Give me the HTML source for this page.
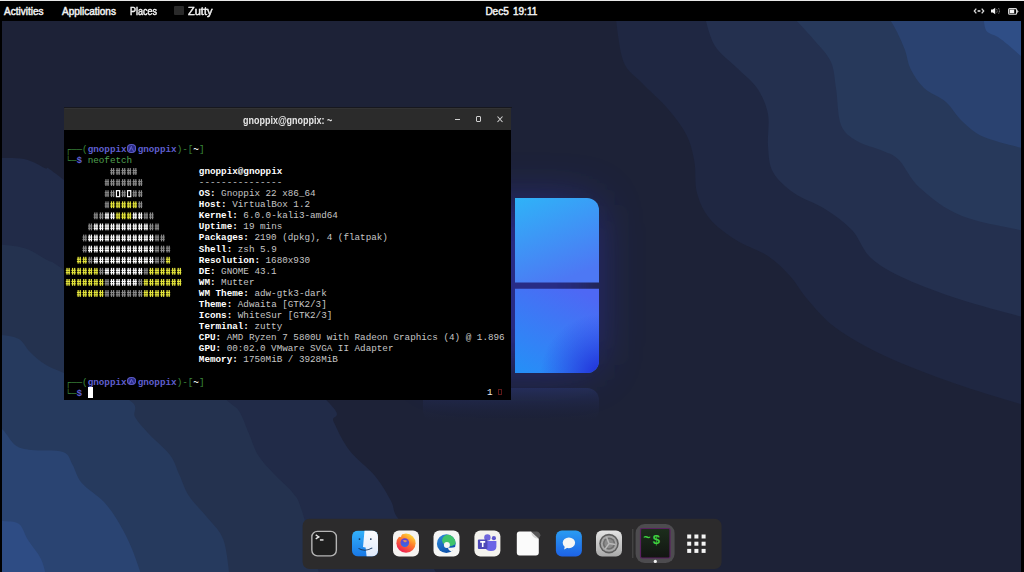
<!DOCTYPE html>
<html><head><meta charset="utf-8">
<style>
*{box-sizing:border-box}
html,body{margin:0;padding:0}
body{width:1024px;height:572px;overflow:hidden;background:#000;position:relative;font-family:"Liberation Sans",sans-serif}
.abs{position:absolute}
#wall{position:absolute;left:2px;top:21px;width:1019px;height:551px;overflow:hidden}
#topbar{position:absolute;left:0;top:0;width:1024px;height:21px;background:#000}
#topbar .t{position:absolute;top:6px;transform-origin:0 0;color:#f2f2f2;font-weight:normal;-webkit-text-stroke:0.45px #f2f2f2;font-size:10px;line-height:12px;white-space:nowrap}
#term{position:absolute;left:64px;top:108px;width:447px;height:292px;background:#000;border-radius:1px 1px 0 0;overflow:hidden}
#thead{position:absolute;left:0;top:0;width:447px;height:22px;background:#2b2b2b}
.tl{position:absolute;font-family:"Liberation Mono",monospace;font-size:9.27px;line-height:11.09px;white-space:pre;color:#cfcfcf}
#dock{position:absolute;left:302px;top:519px;width:420px;height:50px;background:#2e2d2e;border-radius:10px}
.ic{position:absolute;top:530.5px;width:26px;height:26px;border-radius:6px;overflow:hidden}
</style></head>
<body>
<div id="wall">
<svg width="1019" height="551" viewBox="2 21 1019 551" style="position:absolute;left:0;top:0">
<defs>
<radialGradient id="glow" cx="0.5" cy="0.5" r="0.5">
<stop offset="0" stop-color="#2a3a9a" stop-opacity="0.55"/>
<stop offset="0.6" stop-color="#23307a" stop-opacity="0.25"/>
<stop offset="1" stop-color="#1e2235" stop-opacity="0"/>
</radialGradient>
<linearGradient id="wt" gradientUnits="userSpaceOnUse" x1="500" y1="195" x2="540" y2="290">
<stop offset="0" stop-color="#2cb8f8"/>
<stop offset="1" stop-color="#4d78f4"/>
</linearGradient>
<linearGradient id="wb" gradientUnits="userSpaceOnUse" x1="570" y1="285" x2="520" y2="375">
<stop offset="0" stop-color="#4e68f4"/>
<stop offset="1" stop-color="#2490f7"/>
</linearGradient>
<radialGradient id="wb2" gradientUnits="userSpaceOnUse" cx="602" cy="376" r="62">
<stop offset="0" stop-color="#1e2ad6" stop-opacity="1"/>
<stop offset="1" stop-color="#2a3ae0" stop-opacity="0"/>
</radialGradient>
<linearGradient id="refl" x1="0" y1="0" x2="0" y2="1">
<stop offset="0" stop-color="#2c3b78" stop-opacity="0.42"/>
<stop offset="1" stop-color="#1f2440" stop-opacity="0"/>
</linearGradient>
</defs>
<rect x="0" y="0" width="1030" height="600" fill="#1d2237"/>
<path fill="#1f2742" d="M615.7,18.0 C617.0,25.3 619.2,51.2 623.6,62.0 C628.0,72.8 634.6,75.2 642.0,83.0 C649.4,90.8 660.6,100.3 668.0,109.0 C675.4,117.7 682.1,126.2 686.5,135.0 C690.9,143.8 692.6,151.9 694.4,161.6 C696.1,171.3 694.4,183.4 697.0,193.0 C699.6,202.6 703.5,211.2 710.0,219.0 C716.5,226.8 726.3,233.8 736.0,240.0 C745.7,246.2 759.0,250.0 768.0,256.0 C777.0,262.0 783.3,268.7 790.0,276.0 C796.7,283.3 800.3,291.3 808.0,300.0 C815.7,308.7 823.2,318.7 836.0,328.0 C848.8,337.3 865.2,346.7 885.0,356.0 C904.8,365.3 930.8,375.1 955.0,383.6 C979.2,392.1 1017.5,403.1 1030.0,407.0 L1030.0,18.0 Z"/>
<path fill="#24304f" d="M705.0,18.0 C706.7,22.7 709.8,37.8 715.0,46.0 C720.2,54.2 729.0,60.0 736.0,67.0 C743.0,74.0 751.7,80.2 757.0,88.0 C762.3,95.8 766.2,104.3 768.0,114.0 C769.8,123.7 767.2,136.3 768.0,146.0 C768.8,155.7 768.7,164.2 773.0,172.0 C777.3,179.8 785.3,186.8 794.0,193.0 C802.7,199.2 815.3,202.8 825.0,209.0 C834.7,215.2 844.3,221.8 852.0,230.0 C859.7,238.2 862.0,249.8 871.0,258.0 C880.0,266.2 890.8,272.0 906.0,279.0 C921.2,286.0 941.3,293.3 962.0,300.0 C982.7,306.7 1018.7,315.8 1030.0,319.0 L1030.0,18.0 Z"/>
<path fill="#27395b" d="M794.0,18.0 C797.5,21.8 808.8,33.7 815.0,41.0 C821.2,48.3 827.5,54.2 831.0,62.0 C834.5,69.8 834.3,77.5 836.0,88.0 C837.7,98.5 837.5,116.2 841.0,125.0 C844.5,133.8 850.0,136.7 857.0,141.0 C864.0,145.3 876.0,147.8 883.0,151.0 C890.0,154.2 892.8,153.8 899.0,160.0 C905.2,166.2 909.5,178.7 920.0,188.0 C930.5,197.3 943.7,208.7 962.0,216.0 C980.3,223.3 1018.7,229.3 1030.0,232.0 L1030.0,18.0 Z"/>
<path fill="#2a4270" d="M889.0,18.0 C890.2,20.0 893.3,24.7 896.0,30.0 C898.7,35.3 902.6,43.5 905.0,50.0 C907.4,56.5 907.4,62.7 910.6,69.0 C913.8,75.3 918.1,82.5 924.0,88.0 C929.9,93.5 939.7,96.5 946.0,102.0 C952.3,107.5 955.7,115.2 962.0,121.0 C968.3,126.8 972.7,132.2 984.0,137.0 C995.3,141.8 1022.3,147.8 1030.0,150.0 L1030.0,18.0 Z"/>
<path fill="#2f4e86" d="M983.5,18.0 C984.0,20.2 984.2,27.9 986.5,31.0 C988.8,34.1 993.8,34.4 997.4,36.7 C1001.0,39.0 1002.9,40.5 1008.3,45.0 C1013.7,49.5 1026.4,60.8 1030.0,64.0 L1030.0,18.0 Z"/>
<path fill="#212b48" d="M-5.0,158.0 C-0.2,158.2 15.8,157.3 24.0,159.0 C32.2,160.7 37.8,164.5 44.5,168.0 C51.2,171.5 38.1,159.7 64.0,180.0 C89.9,200.3 156.4,253.4 200.0,290.0 C243.6,326.6 303.4,377.5 325.7,399.5 C348.0,421.5 329.6,413.3 333.6,421.8 C337.6,430.3 342.6,441.5 349.5,450.5 C356.4,459.5 368.1,467.6 375.0,476.0 C381.9,484.4 387.3,494.2 391.0,501.0 C394.7,507.8 392.2,509.7 397.0,517.0 C401.8,524.3 412.8,534.5 420.0,545.0 C427.2,555.5 436.7,574.2 440.0,580.0 L-5.0,580.0 Z"/>
<path fill="#24324f" d="M-5.0,244.0 C-0.2,244.7 15.3,245.3 24.0,248.0 C32.7,250.7 40.3,256.3 47.0,260.0 C53.7,263.7 46.8,257.5 64.0,270.0 C81.2,282.5 122.9,313.3 150.0,335.0 C177.1,356.7 211.8,387.3 226.6,400.0 C241.4,412.7 235.3,405.5 239.0,411.0 C242.7,416.5 245.5,425.7 248.7,433.0 C251.9,440.3 253.8,448.2 258.0,455.0 C262.2,461.8 268.2,467.7 274.0,474.0 C279.8,480.3 288.0,486.5 292.7,492.7 C297.4,498.9 297.3,496.4 302.0,511.0 C306.7,525.5 317.8,568.5 321.0,580.0 L-5.0,580.0 Z"/>
<path fill="#263a5e" d="M-5.0,334.0 C-1.2,334.8 12.2,335.6 18.0,338.6 C23.8,341.6 25.6,347.8 30.0,352.0 C34.4,356.2 38.8,360.5 44.5,364.0 C50.2,367.5 49.9,367.0 64.0,373.0 C78.1,379.0 117.2,392.7 129.0,400.0 C140.8,407.3 131.8,411.5 135.0,417.0 C138.2,422.5 142.2,426.7 148.0,433.0 C153.8,439.3 164.8,448.2 170.0,455.0 C175.2,461.8 175.8,467.2 179.0,474.0 C182.2,480.8 184.2,488.7 189.0,496.0 C193.8,503.3 201.9,510.7 207.7,518.0 C213.4,525.3 219.8,529.7 223.5,540.0 C227.2,550.3 228.9,573.3 230.0,580.0 L-5.0,580.0 Z"/>
<path fill="#2a4472" d="M-5.0,428.0 C-3.7,428.3 -0.4,427.1 3.0,430.0 C6.4,432.9 10.9,442.2 15.7,445.5 C20.4,448.8 23.6,448.9 31.5,450.0 C39.4,451.1 56.2,449.6 63.0,452.0 C69.8,454.4 69.3,459.2 72.4,464.4 C75.5,469.6 76.5,476.7 81.8,483.0 C87.1,489.3 97.7,495.2 104.0,502.0 C110.3,508.8 114.9,516.2 119.6,524.0 C124.3,531.8 128.1,539.7 132.0,549.0 C135.9,558.3 141.2,574.8 143.0,580.0 L-5.0,580.0 Z"/>
<path fill="#2e4c84" d="M-5.0,520.0 C-3.7,520.2 -1.0,520.3 3.0,521.0 C7.0,521.7 14.8,520.8 19.0,524.0 C23.2,527.2 24.3,534.2 28.0,540.0 C31.7,545.8 37.8,552.3 41.0,559.0 C44.2,565.7 46.0,576.5 47.0,580.0 L-5.0,580.0 Z"/>

<filter id="bl" x="-100%" y="-100%" width="300%" height="300%"><feGaussianBlur stdDeviation="24"/></filter>
<rect x="433" y="205" width="160" height="160" rx="10" fill="#3036c8" opacity="0.55" filter="url(#bl)"/>
<rect x="423" y="388" width="176" height="34" rx="12" fill="url(#refl)"/>
<path d="M423,198 H508 V283 H423 Z" fill="url(#wt)"/>
<path d="M515,198 H587 A12,12 0 0 1 599,210 V282.5 H515 Z" fill="url(#wt)"/>
<path d="M515,288.8 H599 V361 A12,12 0 0 1 587,373 H515 Z" fill="url(#wb)"/>
<path d="M515,288.8 H599 V361 A12,12 0 0 1 587,373 H515 Z" fill="url(#wb2)"/>
</svg>
</div>

<div id="topbar">
<div class="abs" style="left:0;top:0;width:1024px;height:1px;background:#e8e8e8"></div>
<div class="t" style="left:4px;transform:scaleX(1)">Activities</div>
<div class="t" style="left:62px;transform:scaleX(1)">Applications</div>
<div class="t" style="left:129.7px;transform:scaleX(0.9)">Places</div>
<div class="abs" style="left:174.4px;top:6.2px;width:9.6px;height:9.2px;background:#2a2a2a;border-radius:1px"></div>
<div class="t" style="left:187.8px;transform:scaleX(1.1)">Zutty</div>
<div class="t" style="left:485.4px;transform:scaleX(1)">Dec</div><div class="t" style="left:503.3px;transform:scaleX(1)">5</div><div class="t" style="left:513px;transform:scaleX(1)">19:11</div>
<svg class="abs" style="left:970px;top:4px" width="52" height="14" viewBox="0 0 52 14">
<path d="M6.3,4.6 L4.3,7 L6.3,9.4 M11.7,4.6 L13.7,7 L11.7,9.4" stroke="#d8d8d8" stroke-width="1.3" fill="none"/>
<path d="M7.6,7 H10.4" stroke="#e0e0e0" stroke-width="1.6"/>
<path d="M21,5.6 H22.8 L25.2,3.8 V10.2 L22.8,8.4 H21 Z" fill="#f0f0f0"/>
<path d="M26.6,5.2 Q27.8,7 26.6,8.8 M28.4,4 Q30.4,7 28.4,10" stroke="#9a9a9a" stroke-width="1" fill="none" stroke-dasharray="1 0.6"/>
<rect x="38.6" y="4.6" width="8" height="5.6" rx="1" stroke="#dcdcdc" stroke-width="1.1" fill="none"/>
<rect x="39.6" y="5.6" width="4.6" height="3.6" fill="#f4f4f4"/>
<path d="M47.1,5.8 L48.6,7.4 L47.1,9 Z" fill="#dcdcdc"/>
</svg>
</div>

<div class="abs" style="left:63.5px;top:107px;width:448px;height:1.2px;background:#17181e"></div>
<div id="term">
<div id="thead">
<div class="abs" style="left:0;top:0;width:447px;height:1px;background:#333"></div>
<div class="abs" style="left:178.5px;top:7px;font-size:10px;line-height:12px;font-weight:bold;color:#e6e6e6;white-space:nowrap;transform:scaleX(0.897);transform-origin:0 0">gnoppix@gnoppix: ~</div>
<div class="abs" style="left:390.8px;top:11px;width:5.2px;height:1px;background:#d0d0d0"></div>
<div class="abs" style="left:411.9px;top:8.1px;width:4.9px;height:5.6px;border:1px solid #d0d0d0;border-radius:1px"></div>
<svg class="abs" style="left:432.5px;top:7.6px" width="7" height="7" viewBox="0 0 7 7"><path d="M0.5,0.5 L5.5,6 M5.5,0.5 L0.5,6" stroke="#d0d0d0" stroke-width="1.1"/></svg>
</div>
</div>
<div class="abs" style="left:0;top:0;width:1024px;height:572px">
<div class="tl" style="top:143.75px;left:65.40px"><span style="color:#3d8a3d">┌──(</span><span style="color:#5f5fcf;font-weight:bold">gnoppix</span><span style="display:inline-block;width:11.12px;height:8px;position:relative;vertical-align:-1px"><span style="position:absolute;left:0.6px;top:-0.6px;width:9.3px;height:8.4px;border-radius:45%;background:#2a2a86;border:1.1px solid #5c5cc4"></span><span style="position:absolute;left:3.2px;top:1.2px;width:1.3px;height:5px;background:#6a6ad0;transform:rotate(25deg)"></span><span style="position:absolute;left:5.8px;top:1.8px;width:1.3px;height:4.5px;background:#5a5ac0;transform:rotate(-30deg)"></span></span><span style="color:#5f5fcf;font-weight:bold">gnoppix</span><span style="color:#3d8a3d">)-[</span><span style="color:#ffffff;font-weight:bold">~</span><span style="color:#3d8a3d">]</span></div>
<div class="tl" style="top:154.84px;left:65.40px"><span style="color:#3d8a3d">└─</span><span style="color:#5f5fcf;font-weight:bold">$</span><span style="color:#52a352"> neofetch</span></div>
<svg class="abs" style="left:0;top:0" width="1024" height="572"><g fill="#8a8a8a"><rect x="110.88" y="168.08" width="1.25" height="6.8"/><rect x="112.98" y="168.08" width="1.25" height="6.8"/><rect x="110.28" y="169.98" width="4.3" height="1.1"/><rect x="110.28" y="172.28" width="4.3" height="1.1"/></g><g fill="#8a8a8a"><rect x="116.44" y="168.08" width="1.25" height="6.8"/><rect x="118.54" y="168.08" width="1.25" height="6.8"/><rect x="115.84" y="169.98" width="4.3" height="1.1"/><rect x="115.84" y="172.28" width="4.3" height="1.1"/></g><g fill="#8a8a8a"><rect x="122.00" y="168.08" width="1.25" height="6.8"/><rect x="124.10" y="168.08" width="1.25" height="6.8"/><rect x="121.40" y="169.98" width="4.3" height="1.1"/><rect x="121.40" y="172.28" width="4.3" height="1.1"/></g><g fill="#8a8a8a"><rect x="127.56" y="168.08" width="1.25" height="6.8"/><rect x="129.66" y="168.08" width="1.25" height="6.8"/><rect x="126.96" y="169.98" width="4.3" height="1.1"/><rect x="126.96" y="172.28" width="4.3" height="1.1"/></g><g fill="#8a8a8a"><rect x="133.12" y="168.08" width="1.25" height="6.8"/><rect x="135.22" y="168.08" width="1.25" height="6.8"/><rect x="132.52" y="169.98" width="4.3" height="1.1"/><rect x="132.52" y="172.28" width="4.3" height="1.1"/></g><g fill="#8a8a8a"><rect x="105.32" y="179.17" width="1.25" height="6.8"/><rect x="107.42" y="179.17" width="1.25" height="6.8"/><rect x="104.72" y="181.07" width="4.3" height="1.1"/><rect x="104.72" y="183.37" width="4.3" height="1.1"/></g><g fill="#8a8a8a"><rect x="110.88" y="179.17" width="1.25" height="6.8"/><rect x="112.98" y="179.17" width="1.25" height="6.8"/><rect x="110.28" y="181.07" width="4.3" height="1.1"/><rect x="110.28" y="183.37" width="4.3" height="1.1"/></g><g fill="#8a8a8a"><rect x="116.44" y="179.17" width="1.25" height="6.8"/><rect x="118.54" y="179.17" width="1.25" height="6.8"/><rect x="115.84" y="181.07" width="4.3" height="1.1"/><rect x="115.84" y="183.37" width="4.3" height="1.1"/></g><g fill="#8a8a8a"><rect x="122.00" y="179.17" width="1.25" height="6.8"/><rect x="124.10" y="179.17" width="1.25" height="6.8"/><rect x="121.40" y="181.07" width="4.3" height="1.1"/><rect x="121.40" y="183.37" width="4.3" height="1.1"/></g><g fill="#8a8a8a"><rect x="127.56" y="179.17" width="1.25" height="6.8"/><rect x="129.66" y="179.17" width="1.25" height="6.8"/><rect x="126.96" y="181.07" width="4.3" height="1.1"/><rect x="126.96" y="183.37" width="4.3" height="1.1"/></g><g fill="#8a8a8a"><rect x="133.12" y="179.17" width="1.25" height="6.8"/><rect x="135.22" y="179.17" width="1.25" height="6.8"/><rect x="132.52" y="181.07" width="4.3" height="1.1"/><rect x="132.52" y="183.37" width="4.3" height="1.1"/></g><g fill="#8a8a8a"><rect x="138.68" y="179.17" width="1.25" height="6.8"/><rect x="140.78" y="179.17" width="1.25" height="6.8"/><rect x="138.08" y="181.07" width="4.3" height="1.1"/><rect x="138.08" y="183.37" width="4.3" height="1.1"/></g><g fill="#8a8a8a"><rect x="105.32" y="190.26" width="1.25" height="6.8"/><rect x="107.42" y="190.26" width="1.25" height="6.8"/><rect x="104.72" y="192.16" width="4.3" height="1.1"/><rect x="104.72" y="194.46" width="4.3" height="1.1"/></g><g fill="#8a8a8a"><rect x="110.88" y="190.26" width="1.25" height="6.8"/><rect x="112.98" y="190.26" width="1.25" height="6.8"/><rect x="110.28" y="192.16" width="4.3" height="1.1"/><rect x="110.28" y="194.46" width="4.3" height="1.1"/></g><rect x="116.44" y="190.66" width="3.2" height="6" fill="none" stroke="#ffffff" stroke-width="1.2"/><g fill="#8a8a8a"><rect x="122.00" y="190.26" width="1.25" height="6.8"/><rect x="124.10" y="190.26" width="1.25" height="6.8"/><rect x="121.40" y="192.16" width="4.3" height="1.1"/><rect x="121.40" y="194.46" width="4.3" height="1.1"/></g><rect x="127.56" y="190.66" width="3.2" height="6" fill="none" stroke="#ffffff" stroke-width="1.2"/><g fill="#8a8a8a"><rect x="133.12" y="190.26" width="1.25" height="6.8"/><rect x="135.22" y="190.26" width="1.25" height="6.8"/><rect x="132.52" y="192.16" width="4.3" height="1.1"/><rect x="132.52" y="194.46" width="4.3" height="1.1"/></g><g fill="#8a8a8a"><rect x="138.68" y="190.26" width="1.25" height="6.8"/><rect x="140.78" y="190.26" width="1.25" height="6.8"/><rect x="138.08" y="192.16" width="4.3" height="1.1"/><rect x="138.08" y="194.46" width="4.3" height="1.1"/></g><g fill="#8a8a8a"><rect x="105.32" y="201.35" width="1.25" height="6.8"/><rect x="107.42" y="201.35" width="1.25" height="6.8"/><rect x="104.72" y="203.25" width="4.3" height="1.1"/><rect x="104.72" y="205.55" width="4.3" height="1.1"/></g><g fill="#e6e63c"><rect x="110.88" y="201.35" width="1.25" height="6.8"/><rect x="112.98" y="201.35" width="1.25" height="6.8"/><rect x="110.28" y="203.25" width="4.3" height="1.1"/><rect x="110.28" y="205.55" width="4.3" height="1.1"/></g><g fill="#e6e63c"><rect x="116.44" y="201.35" width="1.25" height="6.8"/><rect x="118.54" y="201.35" width="1.25" height="6.8"/><rect x="115.84" y="203.25" width="4.3" height="1.1"/><rect x="115.84" y="205.55" width="4.3" height="1.1"/></g><g fill="#e6e63c"><rect x="122.00" y="201.35" width="1.25" height="6.8"/><rect x="124.10" y="201.35" width="1.25" height="6.8"/><rect x="121.40" y="203.25" width="4.3" height="1.1"/><rect x="121.40" y="205.55" width="4.3" height="1.1"/></g><g fill="#e6e63c"><rect x="127.56" y="201.35" width="1.25" height="6.8"/><rect x="129.66" y="201.35" width="1.25" height="6.8"/><rect x="126.96" y="203.25" width="4.3" height="1.1"/><rect x="126.96" y="205.55" width="4.3" height="1.1"/></g><g fill="#e6e63c"><rect x="133.12" y="201.35" width="1.25" height="6.8"/><rect x="135.22" y="201.35" width="1.25" height="6.8"/><rect x="132.52" y="203.25" width="4.3" height="1.1"/><rect x="132.52" y="205.55" width="4.3" height="1.1"/></g><g fill="#8a8a8a"><rect x="138.68" y="201.35" width="1.25" height="6.8"/><rect x="140.78" y="201.35" width="1.25" height="6.8"/><rect x="138.08" y="203.25" width="4.3" height="1.1"/><rect x="138.08" y="205.55" width="4.3" height="1.1"/></g><g fill="#8a8a8a"><rect x="94.20" y="212.44" width="1.25" height="6.8"/><rect x="96.30" y="212.44" width="1.25" height="6.8"/><rect x="93.60" y="214.34" width="4.3" height="1.1"/><rect x="93.60" y="216.64" width="4.3" height="1.1"/></g><g fill="#8a8a8a"><rect x="99.76" y="212.44" width="1.25" height="6.8"/><rect x="101.86" y="212.44" width="1.25" height="6.8"/><rect x="99.16" y="214.34" width="4.3" height="1.1"/><rect x="99.16" y="216.64" width="4.3" height="1.1"/></g><g fill="#ffffff"><rect x="105.32" y="212.44" width="1.25" height="6.8"/><rect x="107.42" y="212.44" width="1.25" height="6.8"/><rect x="104.72" y="214.34" width="4.3" height="1.1"/><rect x="104.72" y="216.64" width="4.3" height="1.1"/></g><g fill="#ffffff"><rect x="110.88" y="212.44" width="1.25" height="6.8"/><rect x="112.98" y="212.44" width="1.25" height="6.8"/><rect x="110.28" y="214.34" width="4.3" height="1.1"/><rect x="110.28" y="216.64" width="4.3" height="1.1"/></g><g fill="#e6e63c"><rect x="116.44" y="212.44" width="1.25" height="6.8"/><rect x="118.54" y="212.44" width="1.25" height="6.8"/><rect x="115.84" y="214.34" width="4.3" height="1.1"/><rect x="115.84" y="216.64" width="4.3" height="1.1"/></g><g fill="#e6e63c"><rect x="122.00" y="212.44" width="1.25" height="6.8"/><rect x="124.10" y="212.44" width="1.25" height="6.8"/><rect x="121.40" y="214.34" width="4.3" height="1.1"/><rect x="121.40" y="216.64" width="4.3" height="1.1"/></g><g fill="#e6e63c"><rect x="127.56" y="212.44" width="1.25" height="6.8"/><rect x="129.66" y="212.44" width="1.25" height="6.8"/><rect x="126.96" y="214.34" width="4.3" height="1.1"/><rect x="126.96" y="216.64" width="4.3" height="1.1"/></g><g fill="#ffffff"><rect x="133.12" y="212.44" width="1.25" height="6.8"/><rect x="135.22" y="212.44" width="1.25" height="6.8"/><rect x="132.52" y="214.34" width="4.3" height="1.1"/><rect x="132.52" y="216.64" width="4.3" height="1.1"/></g><g fill="#ffffff"><rect x="138.68" y="212.44" width="1.25" height="6.8"/><rect x="140.78" y="212.44" width="1.25" height="6.8"/><rect x="138.08" y="214.34" width="4.3" height="1.1"/><rect x="138.08" y="216.64" width="4.3" height="1.1"/></g><g fill="#8a8a8a"><rect x="144.24" y="212.44" width="1.25" height="6.8"/><rect x="146.34" y="212.44" width="1.25" height="6.8"/><rect x="143.64" y="214.34" width="4.3" height="1.1"/><rect x="143.64" y="216.64" width="4.3" height="1.1"/></g><g fill="#8a8a8a"><rect x="149.80" y="212.44" width="1.25" height="6.8"/><rect x="151.90" y="212.44" width="1.25" height="6.8"/><rect x="149.20" y="214.34" width="4.3" height="1.1"/><rect x="149.20" y="216.64" width="4.3" height="1.1"/></g><g fill="#8a8a8a"><rect x="88.64" y="223.53" width="1.25" height="6.8"/><rect x="90.74" y="223.53" width="1.25" height="6.8"/><rect x="88.04" y="225.43" width="4.3" height="1.1"/><rect x="88.04" y="227.73" width="4.3" height="1.1"/></g><g fill="#ffffff"><rect x="94.20" y="223.53" width="1.25" height="6.8"/><rect x="96.30" y="223.53" width="1.25" height="6.8"/><rect x="93.60" y="225.43" width="4.3" height="1.1"/><rect x="93.60" y="227.73" width="4.3" height="1.1"/></g><g fill="#ffffff"><rect x="99.76" y="223.53" width="1.25" height="6.8"/><rect x="101.86" y="223.53" width="1.25" height="6.8"/><rect x="99.16" y="225.43" width="4.3" height="1.1"/><rect x="99.16" y="227.73" width="4.3" height="1.1"/></g><g fill="#ffffff"><rect x="105.32" y="223.53" width="1.25" height="6.8"/><rect x="107.42" y="223.53" width="1.25" height="6.8"/><rect x="104.72" y="225.43" width="4.3" height="1.1"/><rect x="104.72" y="227.73" width="4.3" height="1.1"/></g><g fill="#ffffff"><rect x="110.88" y="223.53" width="1.25" height="6.8"/><rect x="112.98" y="223.53" width="1.25" height="6.8"/><rect x="110.28" y="225.43" width="4.3" height="1.1"/><rect x="110.28" y="227.73" width="4.3" height="1.1"/></g><g fill="#ffffff"><rect x="116.44" y="223.53" width="1.25" height="6.8"/><rect x="118.54" y="223.53" width="1.25" height="6.8"/><rect x="115.84" y="225.43" width="4.3" height="1.1"/><rect x="115.84" y="227.73" width="4.3" height="1.1"/></g><g fill="#ffffff"><rect x="122.00" y="223.53" width="1.25" height="6.8"/><rect x="124.10" y="223.53" width="1.25" height="6.8"/><rect x="121.40" y="225.43" width="4.3" height="1.1"/><rect x="121.40" y="227.73" width="4.3" height="1.1"/></g><g fill="#ffffff"><rect x="127.56" y="223.53" width="1.25" height="6.8"/><rect x="129.66" y="223.53" width="1.25" height="6.8"/><rect x="126.96" y="225.43" width="4.3" height="1.1"/><rect x="126.96" y="227.73" width="4.3" height="1.1"/></g><g fill="#ffffff"><rect x="133.12" y="223.53" width="1.25" height="6.8"/><rect x="135.22" y="223.53" width="1.25" height="6.8"/><rect x="132.52" y="225.43" width="4.3" height="1.1"/><rect x="132.52" y="227.73" width="4.3" height="1.1"/></g><g fill="#ffffff"><rect x="138.68" y="223.53" width="1.25" height="6.8"/><rect x="140.78" y="223.53" width="1.25" height="6.8"/><rect x="138.08" y="225.43" width="4.3" height="1.1"/><rect x="138.08" y="227.73" width="4.3" height="1.1"/></g><g fill="#ffffff"><rect x="144.24" y="223.53" width="1.25" height="6.8"/><rect x="146.34" y="223.53" width="1.25" height="6.8"/><rect x="143.64" y="225.43" width="4.3" height="1.1"/><rect x="143.64" y="227.73" width="4.3" height="1.1"/></g><g fill="#8a8a8a"><rect x="149.80" y="223.53" width="1.25" height="6.8"/><rect x="151.90" y="223.53" width="1.25" height="6.8"/><rect x="149.20" y="225.43" width="4.3" height="1.1"/><rect x="149.20" y="227.73" width="4.3" height="1.1"/></g><g fill="#8a8a8a"><rect x="155.36" y="223.53" width="1.25" height="6.8"/><rect x="157.46" y="223.53" width="1.25" height="6.8"/><rect x="154.76" y="225.43" width="4.3" height="1.1"/><rect x="154.76" y="227.73" width="4.3" height="1.1"/></g><g fill="#8a8a8a"><rect x="83.08" y="234.62" width="1.25" height="6.8"/><rect x="85.18" y="234.62" width="1.25" height="6.8"/><rect x="82.48" y="236.52" width="4.3" height="1.1"/><rect x="82.48" y="238.82" width="4.3" height="1.1"/></g><g fill="#ffffff"><rect x="88.64" y="234.62" width="1.25" height="6.8"/><rect x="90.74" y="234.62" width="1.25" height="6.8"/><rect x="88.04" y="236.52" width="4.3" height="1.1"/><rect x="88.04" y="238.82" width="4.3" height="1.1"/></g><g fill="#ffffff"><rect x="94.20" y="234.62" width="1.25" height="6.8"/><rect x="96.30" y="234.62" width="1.25" height="6.8"/><rect x="93.60" y="236.52" width="4.3" height="1.1"/><rect x="93.60" y="238.82" width="4.3" height="1.1"/></g><g fill="#ffffff"><rect x="99.76" y="234.62" width="1.25" height="6.8"/><rect x="101.86" y="234.62" width="1.25" height="6.8"/><rect x="99.16" y="236.52" width="4.3" height="1.1"/><rect x="99.16" y="238.82" width="4.3" height="1.1"/></g><g fill="#ffffff"><rect x="105.32" y="234.62" width="1.25" height="6.8"/><rect x="107.42" y="234.62" width="1.25" height="6.8"/><rect x="104.72" y="236.52" width="4.3" height="1.1"/><rect x="104.72" y="238.82" width="4.3" height="1.1"/></g><g fill="#ffffff"><rect x="110.88" y="234.62" width="1.25" height="6.8"/><rect x="112.98" y="234.62" width="1.25" height="6.8"/><rect x="110.28" y="236.52" width="4.3" height="1.1"/><rect x="110.28" y="238.82" width="4.3" height="1.1"/></g><g fill="#ffffff"><rect x="116.44" y="234.62" width="1.25" height="6.8"/><rect x="118.54" y="234.62" width="1.25" height="6.8"/><rect x="115.84" y="236.52" width="4.3" height="1.1"/><rect x="115.84" y="238.82" width="4.3" height="1.1"/></g><g fill="#ffffff"><rect x="122.00" y="234.62" width="1.25" height="6.8"/><rect x="124.10" y="234.62" width="1.25" height="6.8"/><rect x="121.40" y="236.52" width="4.3" height="1.1"/><rect x="121.40" y="238.82" width="4.3" height="1.1"/></g><g fill="#ffffff"><rect x="127.56" y="234.62" width="1.25" height="6.8"/><rect x="129.66" y="234.62" width="1.25" height="6.8"/><rect x="126.96" y="236.52" width="4.3" height="1.1"/><rect x="126.96" y="238.82" width="4.3" height="1.1"/></g><g fill="#ffffff"><rect x="133.12" y="234.62" width="1.25" height="6.8"/><rect x="135.22" y="234.62" width="1.25" height="6.8"/><rect x="132.52" y="236.52" width="4.3" height="1.1"/><rect x="132.52" y="238.82" width="4.3" height="1.1"/></g><g fill="#ffffff"><rect x="138.68" y="234.62" width="1.25" height="6.8"/><rect x="140.78" y="234.62" width="1.25" height="6.8"/><rect x="138.08" y="236.52" width="4.3" height="1.1"/><rect x="138.08" y="238.82" width="4.3" height="1.1"/></g><g fill="#ffffff"><rect x="144.24" y="234.62" width="1.25" height="6.8"/><rect x="146.34" y="234.62" width="1.25" height="6.8"/><rect x="143.64" y="236.52" width="4.3" height="1.1"/><rect x="143.64" y="238.82" width="4.3" height="1.1"/></g><g fill="#ffffff"><rect x="149.80" y="234.62" width="1.25" height="6.8"/><rect x="151.90" y="234.62" width="1.25" height="6.8"/><rect x="149.20" y="236.52" width="4.3" height="1.1"/><rect x="149.20" y="238.82" width="4.3" height="1.1"/></g><g fill="#8a8a8a"><rect x="155.36" y="234.62" width="1.25" height="6.8"/><rect x="157.46" y="234.62" width="1.25" height="6.8"/><rect x="154.76" y="236.52" width="4.3" height="1.1"/><rect x="154.76" y="238.82" width="4.3" height="1.1"/></g><g fill="#8a8a8a"><rect x="160.92" y="234.62" width="1.25" height="6.8"/><rect x="163.02" y="234.62" width="1.25" height="6.8"/><rect x="160.32" y="236.52" width="4.3" height="1.1"/><rect x="160.32" y="238.82" width="4.3" height="1.1"/></g><g fill="#8a8a8a"><rect x="83.08" y="245.71" width="1.25" height="6.8"/><rect x="85.18" y="245.71" width="1.25" height="6.8"/><rect x="82.48" y="247.61" width="4.3" height="1.1"/><rect x="82.48" y="249.91" width="4.3" height="1.1"/></g><g fill="#ffffff"><rect x="88.64" y="245.71" width="1.25" height="6.8"/><rect x="90.74" y="245.71" width="1.25" height="6.8"/><rect x="88.04" y="247.61" width="4.3" height="1.1"/><rect x="88.04" y="249.91" width="4.3" height="1.1"/></g><g fill="#ffffff"><rect x="94.20" y="245.71" width="1.25" height="6.8"/><rect x="96.30" y="245.71" width="1.25" height="6.8"/><rect x="93.60" y="247.61" width="4.3" height="1.1"/><rect x="93.60" y="249.91" width="4.3" height="1.1"/></g><g fill="#ffffff"><rect x="99.76" y="245.71" width="1.25" height="6.8"/><rect x="101.86" y="245.71" width="1.25" height="6.8"/><rect x="99.16" y="247.61" width="4.3" height="1.1"/><rect x="99.16" y="249.91" width="4.3" height="1.1"/></g><g fill="#ffffff"><rect x="105.32" y="245.71" width="1.25" height="6.8"/><rect x="107.42" y="245.71" width="1.25" height="6.8"/><rect x="104.72" y="247.61" width="4.3" height="1.1"/><rect x="104.72" y="249.91" width="4.3" height="1.1"/></g><g fill="#ffffff"><rect x="110.88" y="245.71" width="1.25" height="6.8"/><rect x="112.98" y="245.71" width="1.25" height="6.8"/><rect x="110.28" y="247.61" width="4.3" height="1.1"/><rect x="110.28" y="249.91" width="4.3" height="1.1"/></g><g fill="#ffffff"><rect x="116.44" y="245.71" width="1.25" height="6.8"/><rect x="118.54" y="245.71" width="1.25" height="6.8"/><rect x="115.84" y="247.61" width="4.3" height="1.1"/><rect x="115.84" y="249.91" width="4.3" height="1.1"/></g><g fill="#ffffff"><rect x="122.00" y="245.71" width="1.25" height="6.8"/><rect x="124.10" y="245.71" width="1.25" height="6.8"/><rect x="121.40" y="247.61" width="4.3" height="1.1"/><rect x="121.40" y="249.91" width="4.3" height="1.1"/></g><g fill="#ffffff"><rect x="127.56" y="245.71" width="1.25" height="6.8"/><rect x="129.66" y="245.71" width="1.25" height="6.8"/><rect x="126.96" y="247.61" width="4.3" height="1.1"/><rect x="126.96" y="249.91" width="4.3" height="1.1"/></g><g fill="#ffffff"><rect x="133.12" y="245.71" width="1.25" height="6.8"/><rect x="135.22" y="245.71" width="1.25" height="6.8"/><rect x="132.52" y="247.61" width="4.3" height="1.1"/><rect x="132.52" y="249.91" width="4.3" height="1.1"/></g><g fill="#ffffff"><rect x="138.68" y="245.71" width="1.25" height="6.8"/><rect x="140.78" y="245.71" width="1.25" height="6.8"/><rect x="138.08" y="247.61" width="4.3" height="1.1"/><rect x="138.08" y="249.91" width="4.3" height="1.1"/></g><g fill="#ffffff"><rect x="144.24" y="245.71" width="1.25" height="6.8"/><rect x="146.34" y="245.71" width="1.25" height="6.8"/><rect x="143.64" y="247.61" width="4.3" height="1.1"/><rect x="143.64" y="249.91" width="4.3" height="1.1"/></g><g fill="#ffffff"><rect x="149.80" y="245.71" width="1.25" height="6.8"/><rect x="151.90" y="245.71" width="1.25" height="6.8"/><rect x="149.20" y="247.61" width="4.3" height="1.1"/><rect x="149.20" y="249.91" width="4.3" height="1.1"/></g><g fill="#8a8a8a"><rect x="155.36" y="245.71" width="1.25" height="6.8"/><rect x="157.46" y="245.71" width="1.25" height="6.8"/><rect x="154.76" y="247.61" width="4.3" height="1.1"/><rect x="154.76" y="249.91" width="4.3" height="1.1"/></g><g fill="#8a8a8a"><rect x="160.92" y="245.71" width="1.25" height="6.8"/><rect x="163.02" y="245.71" width="1.25" height="6.8"/><rect x="160.32" y="247.61" width="4.3" height="1.1"/><rect x="160.32" y="249.91" width="4.3" height="1.1"/></g><g fill="#8a8a8a"><rect x="166.48" y="245.71" width="1.25" height="6.8"/><rect x="168.58" y="245.71" width="1.25" height="6.8"/><rect x="165.88" y="247.61" width="4.3" height="1.1"/><rect x="165.88" y="249.91" width="4.3" height="1.1"/></g><g fill="#e6e63c"><rect x="77.52" y="256.80" width="1.25" height="6.8"/><rect x="79.62" y="256.80" width="1.25" height="6.8"/><rect x="76.92" y="258.70" width="4.3" height="1.1"/><rect x="76.92" y="261.00" width="4.3" height="1.1"/></g><g fill="#e6e63c"><rect x="83.08" y="256.80" width="1.25" height="6.8"/><rect x="85.18" y="256.80" width="1.25" height="6.8"/><rect x="82.48" y="258.70" width="4.3" height="1.1"/><rect x="82.48" y="261.00" width="4.3" height="1.1"/></g><g fill="#8a8a8a"><rect x="88.64" y="256.80" width="1.25" height="6.8"/><rect x="90.74" y="256.80" width="1.25" height="6.8"/><rect x="88.04" y="258.70" width="4.3" height="1.1"/><rect x="88.04" y="261.00" width="4.3" height="1.1"/></g><g fill="#ffffff"><rect x="94.20" y="256.80" width="1.25" height="6.8"/><rect x="96.30" y="256.80" width="1.25" height="6.8"/><rect x="93.60" y="258.70" width="4.3" height="1.1"/><rect x="93.60" y="261.00" width="4.3" height="1.1"/></g><g fill="#ffffff"><rect x="99.76" y="256.80" width="1.25" height="6.8"/><rect x="101.86" y="256.80" width="1.25" height="6.8"/><rect x="99.16" y="258.70" width="4.3" height="1.1"/><rect x="99.16" y="261.00" width="4.3" height="1.1"/></g><g fill="#ffffff"><rect x="105.32" y="256.80" width="1.25" height="6.8"/><rect x="107.42" y="256.80" width="1.25" height="6.8"/><rect x="104.72" y="258.70" width="4.3" height="1.1"/><rect x="104.72" y="261.00" width="4.3" height="1.1"/></g><g fill="#ffffff"><rect x="110.88" y="256.80" width="1.25" height="6.8"/><rect x="112.98" y="256.80" width="1.25" height="6.8"/><rect x="110.28" y="258.70" width="4.3" height="1.1"/><rect x="110.28" y="261.00" width="4.3" height="1.1"/></g><g fill="#ffffff"><rect x="116.44" y="256.80" width="1.25" height="6.8"/><rect x="118.54" y="256.80" width="1.25" height="6.8"/><rect x="115.84" y="258.70" width="4.3" height="1.1"/><rect x="115.84" y="261.00" width="4.3" height="1.1"/></g><g fill="#ffffff"><rect x="122.00" y="256.80" width="1.25" height="6.8"/><rect x="124.10" y="256.80" width="1.25" height="6.8"/><rect x="121.40" y="258.70" width="4.3" height="1.1"/><rect x="121.40" y="261.00" width="4.3" height="1.1"/></g><g fill="#ffffff"><rect x="127.56" y="256.80" width="1.25" height="6.8"/><rect x="129.66" y="256.80" width="1.25" height="6.8"/><rect x="126.96" y="258.70" width="4.3" height="1.1"/><rect x="126.96" y="261.00" width="4.3" height="1.1"/></g><g fill="#ffffff"><rect x="133.12" y="256.80" width="1.25" height="6.8"/><rect x="135.22" y="256.80" width="1.25" height="6.8"/><rect x="132.52" y="258.70" width="4.3" height="1.1"/><rect x="132.52" y="261.00" width="4.3" height="1.1"/></g><g fill="#ffffff"><rect x="138.68" y="256.80" width="1.25" height="6.8"/><rect x="140.78" y="256.80" width="1.25" height="6.8"/><rect x="138.08" y="258.70" width="4.3" height="1.1"/><rect x="138.08" y="261.00" width="4.3" height="1.1"/></g><g fill="#ffffff"><rect x="144.24" y="256.80" width="1.25" height="6.8"/><rect x="146.34" y="256.80" width="1.25" height="6.8"/><rect x="143.64" y="258.70" width="4.3" height="1.1"/><rect x="143.64" y="261.00" width="4.3" height="1.1"/></g><g fill="#ffffff"><rect x="149.80" y="256.80" width="1.25" height="6.8"/><rect x="151.90" y="256.80" width="1.25" height="6.8"/><rect x="149.20" y="258.70" width="4.3" height="1.1"/><rect x="149.20" y="261.00" width="4.3" height="1.1"/></g><g fill="#8a8a8a"><rect x="155.36" y="256.80" width="1.25" height="6.8"/><rect x="157.46" y="256.80" width="1.25" height="6.8"/><rect x="154.76" y="258.70" width="4.3" height="1.1"/><rect x="154.76" y="261.00" width="4.3" height="1.1"/></g><g fill="#8a8a8a"><rect x="160.92" y="256.80" width="1.25" height="6.8"/><rect x="163.02" y="256.80" width="1.25" height="6.8"/><rect x="160.32" y="258.70" width="4.3" height="1.1"/><rect x="160.32" y="261.00" width="4.3" height="1.1"/></g><g fill="#e6e63c"><rect x="166.48" y="256.80" width="1.25" height="6.8"/><rect x="168.58" y="256.80" width="1.25" height="6.8"/><rect x="165.88" y="258.70" width="4.3" height="1.1"/><rect x="165.88" y="261.00" width="4.3" height="1.1"/></g><g fill="#e6e63c"><rect x="66.40" y="267.89" width="1.25" height="6.8"/><rect x="68.50" y="267.89" width="1.25" height="6.8"/><rect x="65.80" y="269.79" width="4.3" height="1.1"/><rect x="65.80" y="272.09" width="4.3" height="1.1"/></g><g fill="#e6e63c"><rect x="71.96" y="267.89" width="1.25" height="6.8"/><rect x="74.06" y="267.89" width="1.25" height="6.8"/><rect x="71.36" y="269.79" width="4.3" height="1.1"/><rect x="71.36" y="272.09" width="4.3" height="1.1"/></g><g fill="#e6e63c"><rect x="77.52" y="267.89" width="1.25" height="6.8"/><rect x="79.62" y="267.89" width="1.25" height="6.8"/><rect x="76.92" y="269.79" width="4.3" height="1.1"/><rect x="76.92" y="272.09" width="4.3" height="1.1"/></g><g fill="#e6e63c"><rect x="83.08" y="267.89" width="1.25" height="6.8"/><rect x="85.18" y="267.89" width="1.25" height="6.8"/><rect x="82.48" y="269.79" width="4.3" height="1.1"/><rect x="82.48" y="272.09" width="4.3" height="1.1"/></g><g fill="#e6e63c"><rect x="88.64" y="267.89" width="1.25" height="6.8"/><rect x="90.74" y="267.89" width="1.25" height="6.8"/><rect x="88.04" y="269.79" width="4.3" height="1.1"/><rect x="88.04" y="272.09" width="4.3" height="1.1"/></g><g fill="#e6e63c"><rect x="94.20" y="267.89" width="1.25" height="6.8"/><rect x="96.30" y="267.89" width="1.25" height="6.8"/><rect x="93.60" y="269.79" width="4.3" height="1.1"/><rect x="93.60" y="272.09" width="4.3" height="1.1"/></g><g fill="#8a8a8a"><rect x="99.76" y="267.89" width="1.25" height="6.8"/><rect x="101.86" y="267.89" width="1.25" height="6.8"/><rect x="99.16" y="269.79" width="4.3" height="1.1"/><rect x="99.16" y="272.09" width="4.3" height="1.1"/></g><g fill="#ffffff"><rect x="105.32" y="267.89" width="1.25" height="6.8"/><rect x="107.42" y="267.89" width="1.25" height="6.8"/><rect x="104.72" y="269.79" width="4.3" height="1.1"/><rect x="104.72" y="272.09" width="4.3" height="1.1"/></g><g fill="#ffffff"><rect x="110.88" y="267.89" width="1.25" height="6.8"/><rect x="112.98" y="267.89" width="1.25" height="6.8"/><rect x="110.28" y="269.79" width="4.3" height="1.1"/><rect x="110.28" y="272.09" width="4.3" height="1.1"/></g><g fill="#ffffff"><rect x="116.44" y="267.89" width="1.25" height="6.8"/><rect x="118.54" y="267.89" width="1.25" height="6.8"/><rect x="115.84" y="269.79" width="4.3" height="1.1"/><rect x="115.84" y="272.09" width="4.3" height="1.1"/></g><g fill="#ffffff"><rect x="122.00" y="267.89" width="1.25" height="6.8"/><rect x="124.10" y="267.89" width="1.25" height="6.8"/><rect x="121.40" y="269.79" width="4.3" height="1.1"/><rect x="121.40" y="272.09" width="4.3" height="1.1"/></g><g fill="#ffffff"><rect x="127.56" y="267.89" width="1.25" height="6.8"/><rect x="129.66" y="267.89" width="1.25" height="6.8"/><rect x="126.96" y="269.79" width="4.3" height="1.1"/><rect x="126.96" y="272.09" width="4.3" height="1.1"/></g><g fill="#ffffff"><rect x="133.12" y="267.89" width="1.25" height="6.8"/><rect x="135.22" y="267.89" width="1.25" height="6.8"/><rect x="132.52" y="269.79" width="4.3" height="1.1"/><rect x="132.52" y="272.09" width="4.3" height="1.1"/></g><g fill="#ffffff"><rect x="138.68" y="267.89" width="1.25" height="6.8"/><rect x="140.78" y="267.89" width="1.25" height="6.8"/><rect x="138.08" y="269.79" width="4.3" height="1.1"/><rect x="138.08" y="272.09" width="4.3" height="1.1"/></g><g fill="#8a8a8a"><rect x="144.24" y="267.89" width="1.25" height="6.8"/><rect x="146.34" y="267.89" width="1.25" height="6.8"/><rect x="143.64" y="269.79" width="4.3" height="1.1"/><rect x="143.64" y="272.09" width="4.3" height="1.1"/></g><g fill="#e6e63c"><rect x="149.80" y="267.89" width="1.25" height="6.8"/><rect x="151.90" y="267.89" width="1.25" height="6.8"/><rect x="149.20" y="269.79" width="4.3" height="1.1"/><rect x="149.20" y="272.09" width="4.3" height="1.1"/></g><g fill="#e6e63c"><rect x="155.36" y="267.89" width="1.25" height="6.8"/><rect x="157.46" y="267.89" width="1.25" height="6.8"/><rect x="154.76" y="269.79" width="4.3" height="1.1"/><rect x="154.76" y="272.09" width="4.3" height="1.1"/></g><g fill="#e6e63c"><rect x="160.92" y="267.89" width="1.25" height="6.8"/><rect x="163.02" y="267.89" width="1.25" height="6.8"/><rect x="160.32" y="269.79" width="4.3" height="1.1"/><rect x="160.32" y="272.09" width="4.3" height="1.1"/></g><g fill="#e6e63c"><rect x="166.48" y="267.89" width="1.25" height="6.8"/><rect x="168.58" y="267.89" width="1.25" height="6.8"/><rect x="165.88" y="269.79" width="4.3" height="1.1"/><rect x="165.88" y="272.09" width="4.3" height="1.1"/></g><g fill="#e6e63c"><rect x="172.04" y="267.89" width="1.25" height="6.8"/><rect x="174.14" y="267.89" width="1.25" height="6.8"/><rect x="171.44" y="269.79" width="4.3" height="1.1"/><rect x="171.44" y="272.09" width="4.3" height="1.1"/></g><g fill="#e6e63c"><rect x="177.60" y="267.89" width="1.25" height="6.8"/><rect x="179.70" y="267.89" width="1.25" height="6.8"/><rect x="177.00" y="269.79" width="4.3" height="1.1"/><rect x="177.00" y="272.09" width="4.3" height="1.1"/></g><g fill="#e6e63c"><rect x="66.40" y="278.98" width="1.25" height="6.8"/><rect x="68.50" y="278.98" width="1.25" height="6.8"/><rect x="65.80" y="280.88" width="4.3" height="1.1"/><rect x="65.80" y="283.18" width="4.3" height="1.1"/></g><g fill="#e6e63c"><rect x="71.96" y="278.98" width="1.25" height="6.8"/><rect x="74.06" y="278.98" width="1.25" height="6.8"/><rect x="71.36" y="280.88" width="4.3" height="1.1"/><rect x="71.36" y="283.18" width="4.3" height="1.1"/></g><g fill="#e6e63c"><rect x="77.52" y="278.98" width="1.25" height="6.8"/><rect x="79.62" y="278.98" width="1.25" height="6.8"/><rect x="76.92" y="280.88" width="4.3" height="1.1"/><rect x="76.92" y="283.18" width="4.3" height="1.1"/></g><g fill="#e6e63c"><rect x="83.08" y="278.98" width="1.25" height="6.8"/><rect x="85.18" y="278.98" width="1.25" height="6.8"/><rect x="82.48" y="280.88" width="4.3" height="1.1"/><rect x="82.48" y="283.18" width="4.3" height="1.1"/></g><g fill="#e6e63c"><rect x="88.64" y="278.98" width="1.25" height="6.8"/><rect x="90.74" y="278.98" width="1.25" height="6.8"/><rect x="88.04" y="280.88" width="4.3" height="1.1"/><rect x="88.04" y="283.18" width="4.3" height="1.1"/></g><g fill="#e6e63c"><rect x="94.20" y="278.98" width="1.25" height="6.8"/><rect x="96.30" y="278.98" width="1.25" height="6.8"/><rect x="93.60" y="280.88" width="4.3" height="1.1"/><rect x="93.60" y="283.18" width="4.3" height="1.1"/></g><g fill="#e6e63c"><rect x="99.76" y="278.98" width="1.25" height="6.8"/><rect x="101.86" y="278.98" width="1.25" height="6.8"/><rect x="99.16" y="280.88" width="4.3" height="1.1"/><rect x="99.16" y="283.18" width="4.3" height="1.1"/></g><g fill="#8a8a8a"><rect x="105.32" y="278.98" width="1.25" height="6.8"/><rect x="107.42" y="278.98" width="1.25" height="6.8"/><rect x="104.72" y="280.88" width="4.3" height="1.1"/><rect x="104.72" y="283.18" width="4.3" height="1.1"/></g><g fill="#ffffff"><rect x="110.88" y="278.98" width="1.25" height="6.8"/><rect x="112.98" y="278.98" width="1.25" height="6.8"/><rect x="110.28" y="280.88" width="4.3" height="1.1"/><rect x="110.28" y="283.18" width="4.3" height="1.1"/></g><g fill="#ffffff"><rect x="116.44" y="278.98" width="1.25" height="6.8"/><rect x="118.54" y="278.98" width="1.25" height="6.8"/><rect x="115.84" y="280.88" width="4.3" height="1.1"/><rect x="115.84" y="283.18" width="4.3" height="1.1"/></g><g fill="#ffffff"><rect x="122.00" y="278.98" width="1.25" height="6.8"/><rect x="124.10" y="278.98" width="1.25" height="6.8"/><rect x="121.40" y="280.88" width="4.3" height="1.1"/><rect x="121.40" y="283.18" width="4.3" height="1.1"/></g><g fill="#ffffff"><rect x="127.56" y="278.98" width="1.25" height="6.8"/><rect x="129.66" y="278.98" width="1.25" height="6.8"/><rect x="126.96" y="280.88" width="4.3" height="1.1"/><rect x="126.96" y="283.18" width="4.3" height="1.1"/></g><g fill="#ffffff"><rect x="133.12" y="278.98" width="1.25" height="6.8"/><rect x="135.22" y="278.98" width="1.25" height="6.8"/><rect x="132.52" y="280.88" width="4.3" height="1.1"/><rect x="132.52" y="283.18" width="4.3" height="1.1"/></g><g fill="#8a8a8a"><rect x="138.68" y="278.98" width="1.25" height="6.8"/><rect x="140.78" y="278.98" width="1.25" height="6.8"/><rect x="138.08" y="280.88" width="4.3" height="1.1"/><rect x="138.08" y="283.18" width="4.3" height="1.1"/></g><g fill="#e6e63c"><rect x="144.24" y="278.98" width="1.25" height="6.8"/><rect x="146.34" y="278.98" width="1.25" height="6.8"/><rect x="143.64" y="280.88" width="4.3" height="1.1"/><rect x="143.64" y="283.18" width="4.3" height="1.1"/></g><g fill="#e6e63c"><rect x="149.80" y="278.98" width="1.25" height="6.8"/><rect x="151.90" y="278.98" width="1.25" height="6.8"/><rect x="149.20" y="280.88" width="4.3" height="1.1"/><rect x="149.20" y="283.18" width="4.3" height="1.1"/></g><g fill="#e6e63c"><rect x="155.36" y="278.98" width="1.25" height="6.8"/><rect x="157.46" y="278.98" width="1.25" height="6.8"/><rect x="154.76" y="280.88" width="4.3" height="1.1"/><rect x="154.76" y="283.18" width="4.3" height="1.1"/></g><g fill="#e6e63c"><rect x="160.92" y="278.98" width="1.25" height="6.8"/><rect x="163.02" y="278.98" width="1.25" height="6.8"/><rect x="160.32" y="280.88" width="4.3" height="1.1"/><rect x="160.32" y="283.18" width="4.3" height="1.1"/></g><g fill="#e6e63c"><rect x="166.48" y="278.98" width="1.25" height="6.8"/><rect x="168.58" y="278.98" width="1.25" height="6.8"/><rect x="165.88" y="280.88" width="4.3" height="1.1"/><rect x="165.88" y="283.18" width="4.3" height="1.1"/></g><g fill="#e6e63c"><rect x="172.04" y="278.98" width="1.25" height="6.8"/><rect x="174.14" y="278.98" width="1.25" height="6.8"/><rect x="171.44" y="280.88" width="4.3" height="1.1"/><rect x="171.44" y="283.18" width="4.3" height="1.1"/></g><g fill="#e6e63c"><rect x="177.60" y="278.98" width="1.25" height="6.8"/><rect x="179.70" y="278.98" width="1.25" height="6.8"/><rect x="177.00" y="280.88" width="4.3" height="1.1"/><rect x="177.00" y="283.18" width="4.3" height="1.1"/></g><g fill="#e6e63c"><rect x="77.52" y="290.07" width="1.25" height="6.8"/><rect x="79.62" y="290.07" width="1.25" height="6.8"/><rect x="76.92" y="291.97" width="4.3" height="1.1"/><rect x="76.92" y="294.27" width="4.3" height="1.1"/></g><g fill="#e6e63c"><rect x="83.08" y="290.07" width="1.25" height="6.8"/><rect x="85.18" y="290.07" width="1.25" height="6.8"/><rect x="82.48" y="291.97" width="4.3" height="1.1"/><rect x="82.48" y="294.27" width="4.3" height="1.1"/></g><g fill="#e6e63c"><rect x="88.64" y="290.07" width="1.25" height="6.8"/><rect x="90.74" y="290.07" width="1.25" height="6.8"/><rect x="88.04" y="291.97" width="4.3" height="1.1"/><rect x="88.04" y="294.27" width="4.3" height="1.1"/></g><g fill="#e6e63c"><rect x="94.20" y="290.07" width="1.25" height="6.8"/><rect x="96.30" y="290.07" width="1.25" height="6.8"/><rect x="93.60" y="291.97" width="4.3" height="1.1"/><rect x="93.60" y="294.27" width="4.3" height="1.1"/></g><g fill="#e6e63c"><rect x="99.76" y="290.07" width="1.25" height="6.8"/><rect x="101.86" y="290.07" width="1.25" height="6.8"/><rect x="99.16" y="291.97" width="4.3" height="1.1"/><rect x="99.16" y="294.27" width="4.3" height="1.1"/></g><g fill="#8a8a8a"><rect x="105.32" y="290.07" width="1.25" height="6.8"/><rect x="107.42" y="290.07" width="1.25" height="6.8"/><rect x="104.72" y="291.97" width="4.3" height="1.1"/><rect x="104.72" y="294.27" width="4.3" height="1.1"/></g><g fill="#8a8a8a"><rect x="110.88" y="290.07" width="1.25" height="6.8"/><rect x="112.98" y="290.07" width="1.25" height="6.8"/><rect x="110.28" y="291.97" width="4.3" height="1.1"/><rect x="110.28" y="294.27" width="4.3" height="1.1"/></g><g fill="#8a8a8a"><rect x="116.44" y="290.07" width="1.25" height="6.8"/><rect x="118.54" y="290.07" width="1.25" height="6.8"/><rect x="115.84" y="291.97" width="4.3" height="1.1"/><rect x="115.84" y="294.27" width="4.3" height="1.1"/></g><g fill="#8a8a8a"><rect x="122.00" y="290.07" width="1.25" height="6.8"/><rect x="124.10" y="290.07" width="1.25" height="6.8"/><rect x="121.40" y="291.97" width="4.3" height="1.1"/><rect x="121.40" y="294.27" width="4.3" height="1.1"/></g><g fill="#8a8a8a"><rect x="127.56" y="290.07" width="1.25" height="6.8"/><rect x="129.66" y="290.07" width="1.25" height="6.8"/><rect x="126.96" y="291.97" width="4.3" height="1.1"/><rect x="126.96" y="294.27" width="4.3" height="1.1"/></g><g fill="#8a8a8a"><rect x="133.12" y="290.07" width="1.25" height="6.8"/><rect x="135.22" y="290.07" width="1.25" height="6.8"/><rect x="132.52" y="291.97" width="4.3" height="1.1"/><rect x="132.52" y="294.27" width="4.3" height="1.1"/></g><g fill="#8a8a8a"><rect x="138.68" y="290.07" width="1.25" height="6.8"/><rect x="140.78" y="290.07" width="1.25" height="6.8"/><rect x="138.08" y="291.97" width="4.3" height="1.1"/><rect x="138.08" y="294.27" width="4.3" height="1.1"/></g><g fill="#e6e63c"><rect x="144.24" y="290.07" width="1.25" height="6.8"/><rect x="146.34" y="290.07" width="1.25" height="6.8"/><rect x="143.64" y="291.97" width="4.3" height="1.1"/><rect x="143.64" y="294.27" width="4.3" height="1.1"/></g><g fill="#e6e63c"><rect x="149.80" y="290.07" width="1.25" height="6.8"/><rect x="151.90" y="290.07" width="1.25" height="6.8"/><rect x="149.20" y="291.97" width="4.3" height="1.1"/><rect x="149.20" y="294.27" width="4.3" height="1.1"/></g><g fill="#e6e63c"><rect x="155.36" y="290.07" width="1.25" height="6.8"/><rect x="157.46" y="290.07" width="1.25" height="6.8"/><rect x="154.76" y="291.97" width="4.3" height="1.1"/><rect x="154.76" y="294.27" width="4.3" height="1.1"/></g><g fill="#e6e63c"><rect x="160.92" y="290.07" width="1.25" height="6.8"/><rect x="163.02" y="290.07" width="1.25" height="6.8"/><rect x="160.32" y="291.97" width="4.3" height="1.1"/><rect x="160.32" y="294.27" width="4.3" height="1.1"/></g><g fill="#e6e63c"><rect x="166.48" y="290.07" width="1.25" height="6.8"/><rect x="168.58" y="290.07" width="1.25" height="6.8"/><rect x="165.88" y="291.97" width="4.3" height="1.1"/><rect x="165.88" y="294.27" width="4.3" height="1.1"/></g></svg>
<div class="tl" style="top:165.94px;left:198.84px"><span style="color:#ffffff;font-weight:bold">gnoppix</span><span style="color:#ffffff;font-weight:bold">@</span><span style="color:#ffffff;font-weight:bold">gnoppix</span></div>
<div class="tl" style="top:177.03px;left:198.84px"><span style="color:#c6c6c6">---------------</span></div>
<div class="tl" style="top:188.11px;left:198.84px"><span style="color:#ffffff;font-weight:bold">OS</span><span style="color:#ffffff;font-weight:bold">: </span><span style="color:#c6c6c6">Gnoppix 22 x86_64</span></div>
<div class="tl" style="top:199.21px;left:198.84px"><span style="color:#ffffff;font-weight:bold">Host</span><span style="color:#ffffff;font-weight:bold">: </span><span style="color:#c6c6c6">VirtualBox 1.2</span></div>
<div class="tl" style="top:210.29px;left:198.84px"><span style="color:#ffffff;font-weight:bold">Kernel</span><span style="color:#ffffff;font-weight:bold">: </span><span style="color:#c6c6c6">6.0.0-kali3-amd64</span></div>
<div class="tl" style="top:221.38px;left:198.84px"><span style="color:#ffffff;font-weight:bold">Uptime</span><span style="color:#ffffff;font-weight:bold">: </span><span style="color:#c6c6c6">19 mins</span></div>
<div class="tl" style="top:232.47px;left:198.84px"><span style="color:#ffffff;font-weight:bold">Packages</span><span style="color:#ffffff;font-weight:bold">: </span><span style="color:#c6c6c6">2190 (dpkg), 4 (flatpak)</span></div>
<div class="tl" style="top:243.56px;left:198.84px"><span style="color:#ffffff;font-weight:bold">Shell</span><span style="color:#ffffff;font-weight:bold">: </span><span style="color:#c6c6c6">zsh 5.9</span></div>
<div class="tl" style="top:254.66px;left:198.84px"><span style="color:#ffffff;font-weight:bold">Resolution</span><span style="color:#ffffff;font-weight:bold">: </span><span style="color:#c6c6c6">1680x930</span></div>
<div class="tl" style="top:265.74px;left:198.84px"><span style="color:#ffffff;font-weight:bold">DE</span><span style="color:#ffffff;font-weight:bold">: </span><span style="color:#c6c6c6">GNOME 43.1</span></div>
<div class="tl" style="top:276.83px;left:198.84px"><span style="color:#ffffff;font-weight:bold">WM</span><span style="color:#ffffff;font-weight:bold">: </span><span style="color:#c6c6c6">Mutter</span></div>
<div class="tl" style="top:287.92px;left:198.84px"><span style="color:#ffffff;font-weight:bold">WM Theme</span><span style="color:#ffffff;font-weight:bold">: </span><span style="color:#c6c6c6">adw-gtk3-dark</span></div>
<div class="tl" style="top:299.01px;left:198.84px"><span style="color:#ffffff;font-weight:bold">Theme</span><span style="color:#ffffff;font-weight:bold">: </span><span style="color:#c6c6c6">Adwaita [GTK2/3]</span></div>
<div class="tl" style="top:310.10px;left:198.84px"><span style="color:#ffffff;font-weight:bold">Icons</span><span style="color:#ffffff;font-weight:bold">: </span><span style="color:#c6c6c6">WhiteSur [GTK2/3]</span></div>
<div class="tl" style="top:321.19px;left:198.84px"><span style="color:#ffffff;font-weight:bold">Terminal</span><span style="color:#ffffff;font-weight:bold">: </span><span style="color:#c6c6c6">zutty</span></div>
<div class="tl" style="top:332.28px;left:198.84px"><span style="color:#ffffff;font-weight:bold">CPU</span><span style="color:#ffffff;font-weight:bold">: </span><span style="color:#c6c6c6">AMD Ryzen 7 5800U with Radeon Graphics (4) @ 1.896</span></div>
<div class="tl" style="top:343.38px;left:198.84px"><span style="color:#ffffff;font-weight:bold">GPU</span><span style="color:#ffffff;font-weight:bold">: </span><span style="color:#c6c6c6">00:02.0 VMware SVGA II Adapter</span></div>
<div class="tl" style="top:354.46px;left:198.84px"><span style="color:#ffffff;font-weight:bold">Memory</span><span style="color:#ffffff;font-weight:bold">: </span><span style="color:#c6c6c6">1750MiB / 3928MiB</span></div>
<div class="tl" style="top:376.64px;left:65.40px"><span style="color:#3d8a3d">┌──(</span><span style="color:#5f5fcf;font-weight:bold">gnoppix</span><span style="display:inline-block;width:11.12px;height:8px;position:relative;vertical-align:-1px"><span style="position:absolute;left:0.6px;top:-0.6px;width:9.3px;height:8.4px;border-radius:45%;background:#2a2a86;border:1.1px solid #5c5cc4"></span><span style="position:absolute;left:3.2px;top:1.2px;width:1.3px;height:5px;background:#6a6ad0;transform:rotate(25deg)"></span><span style="position:absolute;left:5.8px;top:1.8px;width:1.3px;height:4.5px;background:#5a5ac0;transform:rotate(-30deg)"></span></span><span style="color:#5f5fcf;font-weight:bold">gnoppix</span><span style="color:#3d8a3d">)-[</span><span style="color:#ffffff;font-weight:bold">~</span><span style="color:#3d8a3d">]</span></div>
<div class="tl" style="top:387.73px;left:65.40px"><span style="color:#3d8a3d">└─</span><span style="color:#5f5fcf;font-weight:bold">$</span></div>
<div class="abs" style="left:87.6px;top:387px;width:5.5px;height:10.8px;background:#fff"></div>
<div class="tl" style="left:487px;top:386.5px;color:#eee">1</div>
<div class="abs" style="left:497.5px;top:389px;width:4px;height:6px;border:1px solid #5e1818"></div>
</div>

<svg class="abs" style="left:295px;top:515px" width="435" height="57" viewBox="0 0 435 57">
<defs>
<linearGradient id="fnd" x1="0" y1="0" x2="0" y2="1"><stop offset="0" stop-color="#34b2fa"/><stop offset="1" stop-color="#1877e6"/></linearGradient>
<linearGradient id="fndr" x1="0" y1="0" x2="0" y2="1"><stop offset="0" stop-color="#fbfcff"/><stop offset="1" stop-color="#dfe9fa"/></linearGradient>
<linearGradient id="ffx" x1="0.8" y1="0.1" x2="0.3" y2="0.9"><stop offset="0" stop-color="#ffd43a"/><stop offset="0.45" stop-color="#ff7a2a"/><stop offset="1" stop-color="#f0274f"/></linearGradient>
<linearGradient id="ffg" x1="0" y1="0" x2="0" y2="1"><stop offset="0" stop-color="#6a3ad0"/><stop offset="1" stop-color="#2f6ee8"/></linearGradient>
<linearGradient id="edb" x1="0" y1="0" x2="0.6" y2="1"><stop offset="0" stop-color="#2f8ee0"/><stop offset="1" stop-color="#0c4fa8"/></linearGradient>
<linearGradient id="msg" x1="0" y1="0" x2="0" y2="1"><stop offset="0" stop-color="#2a9cf2"/><stop offset="1" stop-color="#1d62e6"/></linearGradient>
<linearGradient id="set" x1="0" y1="0" x2="0" y2="1"><stop offset="0" stop-color="#e4e4e4"/><stop offset="1" stop-color="#a9a9a9"/></linearGradient>
<linearGradient id="ztg" x1="0" y1="0" x2="0" y2="1"><stop offset="0" stop-color="#1c2e1c"/><stop offset="1" stop-color="#121512"/></linearGradient>
<clipPath id="r26"><rect x="0" y="0" width="26" height="26" rx="6"/></clipPath>
</defs>
<rect x="7.6" y="3.8" width="419" height="50.3" rx="7" fill="#2c2b2c"/>
<!-- terminal -->
<g transform="translate(16.1,15.6)">
<rect x="0.75" y="0.75" width="24.5" height="24.5" rx="5.5" fill="#1f1f1f" stroke="#b5b5b5" stroke-width="1.4"/>
<path d="M4.6,4.3 L7.8,6.3 L4.6,8.3" stroke="#e8e8e8" stroke-width="1.3" fill="none"/>
<rect x="8.8" y="8.6" width="3.6" height="1.5" fill="#e0e0e0"/>
</g>
<!-- finder -->
<g transform="translate(57,15.6)" clip-path="url(#r26)">
<rect width="26" height="26" fill="url(#fnd)"/>
<path d="M12.5,0 L26,0 L26,26 L14.6,26 L13.6,17 L11,16.5 Z" fill="url(#fndr)"/>
<circle cx="7.5" cy="8.5" r="0.9" fill="#14345a"/><circle cx="18.8" cy="8.5" r="0.9" fill="#14345a"/>
<path d="M6.5,17.8 Q13,21.6 20.3,17.3" stroke="#163a66" stroke-width="1.1" fill="none"/>
</g>
<!-- firefox -->
<g transform="translate(98,15.6)">
<rect width="26" height="26" rx="6" fill="#f6f3f1"/>
<circle cx="13" cy="12.6" r="9.6" fill="url(#ffx)"/>
<path d="M4.5,6 Q6,3 9,3.2 L8,6.5 Z" fill="#f6f3f1"/>
<circle cx="11.8" cy="12" r="4.3" fill="url(#ffg)"/>
<path d="M9.5,10 Q12,8.6 14.5,10.5 L12,12 Z" fill="#ffa23a" opacity="0.8"/>
</g>
<!-- edge -->
<g transform="translate(138.5,15.6)">
<rect width="26" height="26" rx="6" fill="#f6f6f5"/>
<clipPath id="edc"><circle cx="12.8" cy="13.1" r="9.4"/></clipPath>
<circle cx="12.8" cy="13.1" r="9.4" fill="url(#edb)"/>
<ellipse cx="16" cy="9.6" rx="7.4" ry="6" fill="#3fc46c" clip-path="url(#edc)"/>
<circle cx="13.4" cy="14.3" r="3" fill="#f6f6f5"/>
<path d="M14.5,16.8 Q18,17.6 22,16.4 Q21,19.8 18,21 Q14.5,19.5 14.5,16.8 Z" fill="#f6f6f5"/>
</g>
<!-- teams -->
<g transform="translate(179.4,15.6)">
<rect width="26" height="26" rx="6" fill="#f4f3ee"/>
<circle cx="13" cy="6.8" r="3.2" fill="#6e66dc"/>
<circle cx="19.5" cy="7.6" r="2.1" fill="#5d56cc"/>
<path d="M10,10.5 H22 V16 Q22,20.5 16.5,20.5 Q11.5,20.5 10.5,16 Z" fill="#6a64e6"/>
<rect x="3.5" y="9" width="9.5" height="9.5" rx="1" fill="#4d48b8"/>
<path d="M5.8,11.3 H10.8 M8.3,11.3 V16.5" stroke="#ffffff" stroke-width="1.6"/>
</g>
<!-- file -->
<g transform="translate(221,15.6)">
<path d="M3.5,0.8 H15 L22.8,8.2 V22 Q22.8,25 19.8,25 H3.5 Q0.8,25 0.8,22 V3.8 Q0.8,0.8 3.5,0.8 Z" fill="#fbfbfb"/>
<path d="M15,0.8 L22.8,8.2 Q20,8.5 17.5,6.5 Q15.5,4.5 15,0.8 Z" fill="#d8d8d8"/>
<path d="M15,0.8 L21,0.8 Q24,1.5 24.5,5 L22.8,8.2 Z" fill="#6a6a6a" opacity="0.7"/>
</g>
<!-- messages -->
<g transform="translate(260.9,15.6)">
<rect width="26" height="26" rx="6" fill="url(#msg)"/>
<ellipse cx="13" cy="12.2" rx="6.2" ry="5.4" fill="#f6f6f4"/>
<path d="M9,15.5 L8.2,19 L12,16.8 Z" fill="#f6f6f4"/>
</g>
<!-- settings -->
<g transform="translate(301,15.6)">
<rect width="26" height="26" rx="6" fill="url(#set)"/>
<circle cx="13" cy="13" r="9.8" fill="#5e5e5e"/>
<circle cx="13" cy="13" r="8.2" fill="#a6a6a6"/>
<circle cx="13" cy="13" r="6.2" fill="#6e6e6e"/>
<circle cx="13" cy="13" r="4.6" fill="#8a8a8a"/>
<path d="M13,13 L10.5,6.6 M13,13 L19.5,14 M13,13 L9,18.6" stroke="#b9b9b9" stroke-width="1.5"/>
</g>
<rect x="337.3" y="14" width="1" height="29" fill="#4e4e4e"/>
<rect x="340.6" y="9" width="39" height="39" rx="9" fill="#4d4c4f"/>
<rect x="345.5" y="13.5" width="29.5" height="29.5" rx="1.5" fill="url(#ztg)" stroke="#5a2060" stroke-width="1.2"/>
<text x="348.2" y="27.2" font-family="Liberation Mono" font-weight="bold" font-size="12.5" fill="#3fd13f">~</text>
<text x="357.5" y="29" font-family="Liberation Mono" font-weight="bold" font-size="13" fill="#3fd13f">$</text>
<circle cx="360.3" cy="46.4" r="1.6" fill="#f2f2f2"/>
<g fill="#f4f4f4">
<rect x="392.2" y="19.5" width="4" height="4"/><rect x="399.4" y="19.5" width="4" height="4"/><rect x="406.6" y="19.5" width="4" height="4"/>
<rect x="392.2" y="26.7" width="4" height="4"/><rect x="399.4" y="26.7" width="4" height="4"/><rect x="406.6" y="26.7" width="4" height="4"/>
<rect x="392.2" y="33.9" width="4" height="4"/><rect x="399.4" y="33.9" width="4" height="4"/><rect x="406.6" y="33.9" width="4" height="4"/>
</g>
</svg>
</body></html>
